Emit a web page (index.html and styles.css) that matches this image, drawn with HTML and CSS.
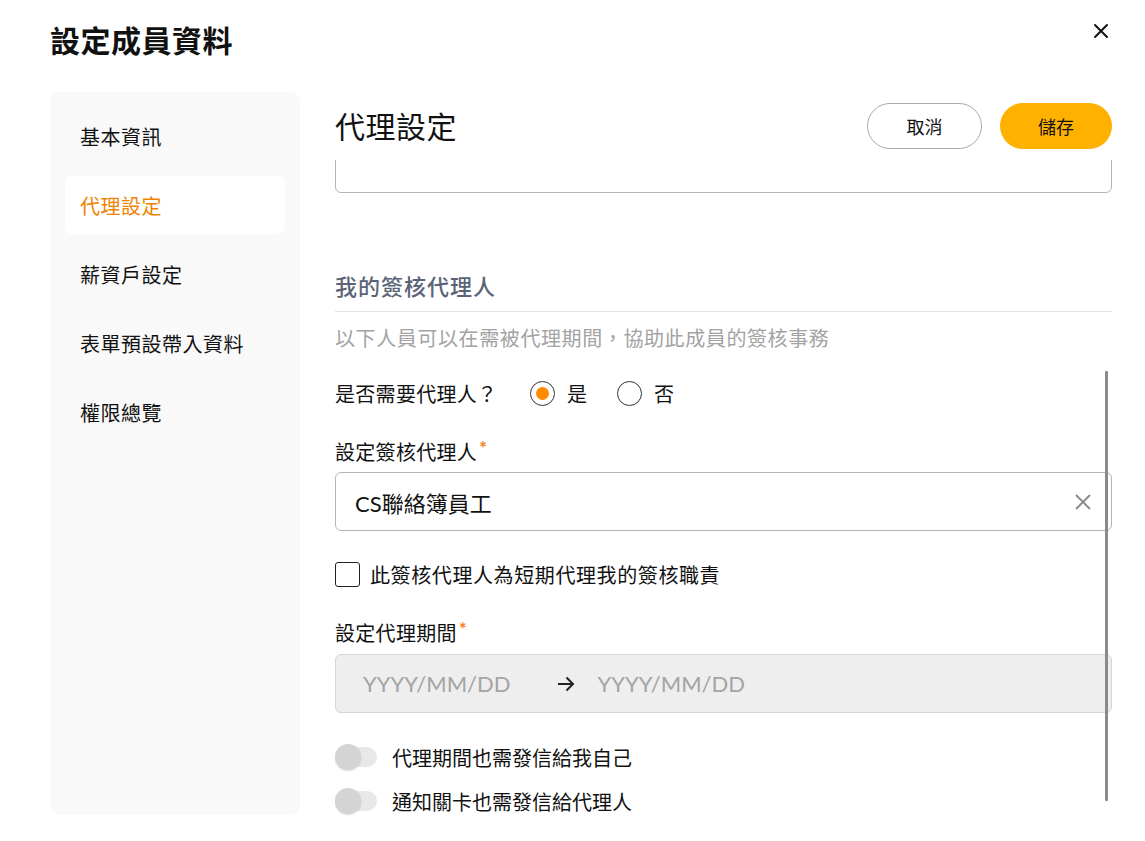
FILE: index.html
```html
<!DOCTYPE html>
<html lang="zh-Hant">
<head>
<meta charset="utf-8">
<title>設定成員資料</title>
<link rel="stylesheet" href="styles.css">
</head>
<body>
<div class="page">
  <header class="top">
    <h1 class="title">設定成員資料</h1>
    <button class="close" aria-label="close">
      <svg width="16" height="16" viewBox="0 0 16 16"><path d="M2 2L14 14M14 2L2 14" stroke="#111" stroke-width="2" stroke-linecap="round"/></svg>
    </button>
  </header>
  <div class="layout">
    <nav class="sidebar">
      <div class="nav-item">基本資訊</div>
      <div class="nav-item active">代理設定</div>
      <div class="nav-item">薪資戶設定</div>
      <div class="nav-item">表單預設帶入資料</div>
      <div class="nav-item">權限總覽</div>
    </nav>
    <main class="main">
      <div class="main-head">
        <h2 class="heading">代理設定</h2>
        <div class="actions">
          <button class="btn btn-cancel">取消</button>
          <button class="btn btn-save">儲存</button>
        </div>
      </div>
      <div class="scroll">
        <div class="scroll-inner">
          <div class="field-box cut"></div>
          <h3 class="section-title">我的簽核代理人</h3>
          <p class="desc">以下人員可以在需被代理期間，協助此成員的簽核事務</p>
          <div class="radio-row">
            <span class="q">是否需要代理人？</span>
            <label class="radio"><span class="radio-circle checked"></span>是</label>
            <label class="radio"><span class="radio-circle"></span>否</label>
          </div>
          <div class="label">設定簽核代理人<span class="req">*</span></div>
          <div class="field-box select">
            <span class="value">CS聯絡簿員工</span>
            <svg class="clear" width="18" height="18" viewBox="0 0 18 18"><path d="M2 2L16 16M16 2L2 16" stroke="#8a8a8a" stroke-width="1.8"/></svg>
          </div>
          <label class="check-row"><span class="checkbox"></span>此簽核代理人為短期代理我的簽核職責</label>
          <div class="label label-date">設定代理期間<span class="req">*</span></div>
          <div class="field-box date">
            <span class="ph">YYYY/MM/DD</span>
            <svg class="arrow" width="20" height="18" viewBox="0 0 20 18"><path d="M2 9H17M10.5 2.5L17 9L10.5 15.5" fill="none" stroke="#222" stroke-width="2"/></svg>
            <span class="ph">YYYY/MM/DD</span>
          </div>
          <div class="toggle-row first"><span class="toggle"><span class="knob"></span></span>代理期間也需發信給我自己</div>
          <div class="toggle-row"><span class="toggle"><span class="knob"></span></span>通知關卡也需發信給代理人</div>
        </div>
      </div>
      <div class="scrollbar"></div>
    </main>
  </div>
</div>
</body>
</html>
```

FILE: styles.css
```css
* { box-sizing: border-box; }
html, body { margin: 0; padding: 0; background: #fff; }
body {
  font-family: Lato, "Noto Sans CJK TC", "Noto Sans", sans-serif;
  color: #111;
  height: 841px;
  overflow: hidden;
}
.page { padding: 0 33px 0 50px; }
.top {
  height: 92px;
  display: flex;
  align-items: flex-start;
  justify-content: space-between;
}
.title {
  margin: 20px 0 0 0;
  font-size: 30px;
  line-height: 40px;
  font-weight: 700;
  letter-spacing: 0.5px;
}
.close {
  margin: 23px 3px 0 0;
  padding: 0;
  border: 0;
  background: none;
  width: 16px;
  height: 16px;
  display: flex;
}
.layout { display: flex; gap: 35px; }
.sidebar {
  width: 250px;
  height: 723px;
  background: #f9f9f9;
  border-radius: 10px;
  padding: 15px 15px;
  display: flex;
  flex-direction: column;
  gap: 11px;
}
.nav-item {
  height: 58px;
  padding: 0 15px;
  display: flex;
  align-items: center;
  font-size: 20px;
  letter-spacing: 0.5px;
  border-radius: 8px;
}
.nav-item.active { background: #fff; color: #f08300; }
.main { width: 777px; position: relative; }
.main-head {
  height: 68px;
  display: flex;
  justify-content: space-between;
  align-items: center;
}
.heading { margin: 0; font-size: 30px; font-weight: 400; line-height: 40px; letter-spacing: 0.5px; }
.actions { display: flex; gap: 18px; }
.btn {
  height: 46px;
  border-radius: 23px;
  font-family: inherit;
  font-size: 18px;
  color: #111;
  cursor: pointer;
}
.btn-cancel { width: 115px; background: #fff; border: 1px solid #a9a9a9; }
.btn-save { width: 112px; background: #ffb100; border: 0; }
.scroll { height: 681px; overflow: hidden; }
.scroll-inner { margin-top: -26px; }
.field-box {
  height: 59px;
  border: 1px solid #b5b5b5;
  border-radius: 6px;
  display: flex;
  align-items: center;
}
.section-title {
  margin: 80px 0 0 0;
  font-size: 22px;
  line-height: 28px;
  font-weight: 500;
  letter-spacing: 1px;
  color: #5b6477;
  padding-bottom: 10px;
  border-bottom: 1px solid #e3e3e3;
}
.desc {
  margin: 13px 0 0 0;
  font-size: 20px;
  line-height: 26px;
  letter-spacing: 0.6px;
  color: #a3a3a3;
}
.radio-row {
  margin-top: 29px;
  height: 26px;
  display: flex;
  align-items: center;
  font-size: 20px;
}
.q { width: 195px; letter-spacing: 0.3px; }
.radio { display: flex; align-items: center; gap: 12px; margin-right: 30px; }
.radio-circle {
  width: 25px; height: 25px;
  border: 1.5px solid #333;
  border-radius: 50%;
  display: flex; align-items: center; justify-content: center;
}
.radio-circle.checked::after {
  content: "";
  width: 13px; height: 13px;
  border-radius: 50%;
  background: #ff8a00;
}
.label { margin-top: 33px; font-size: 20px; line-height: 26px; letter-spacing: 0.3px; }
.req { color: #f5821f; font-size: 19px; font-weight: 700; vertical-align: top; line-height: 18px; margin-left: 2px; }
.select { margin-top: 7px; padding: 0 19px 0 19px; justify-content: space-between; }
.value { font-size: 22px; }
.check-row {
  margin-top: 31px;
  display: flex;
  align-items: center;
  gap: 10px;
  font-size: 20px;
  letter-spacing: 0.6px;
  height: 25px;
}
.checkbox {
  width: 25px; height: 25px;
  border: 1.5px solid #222;
  border-radius: 3px;
}
.label-date { margin-top: 33px; }
.date {
  margin-top: 8px;
  background: #eeeeee;
  border-color: #d6d6d6;
  padding: 0 27px;
  gap: 45px;
}
.date .arrow { margin-right: -23px; }
.ph { font-size: 22px; color: #a4a4a4; }
.toggle-row {
  display: flex;
  align-items: center;
  gap: 15px;
  font-size: 20px;
  height: 26px;
  margin-top: 18px;
}
.toggle-row.first { margin-top: 31px; }
.toggle {
  width: 42px; height: 20px;
  background: #e8e8e8;
  border-radius: 10px;
  position: relative;
  display: flex;
  align-items: center;
}
.knob {
  width: 26px; height: 26px;
  border-radius: 50%;
  background: #d4d4d4;
  box-shadow: 0 1px 2px rgba(0,0,0,0.15);
  position: absolute;
  left: 0;
  top: -3px;
}
.scrollbar {
  position: absolute;
  left: 770px;
  top: 279px;
  width: 3px;
  height: 430px;
  background: #8a8a8a;
  border-radius: 1px;
}
```
